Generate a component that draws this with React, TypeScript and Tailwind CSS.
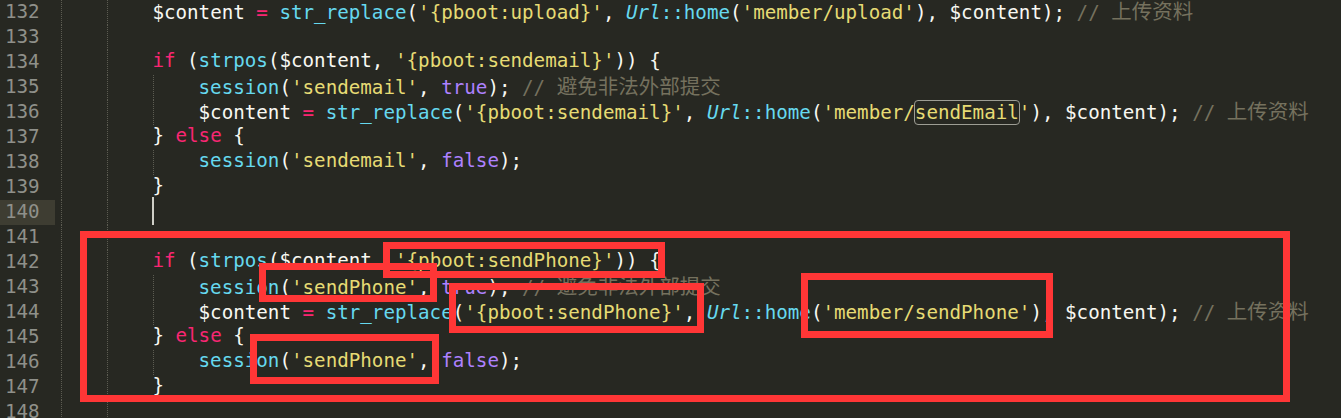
import React from 'react';

type Tok = [string, string];

const C = {
  kw: 'text-[#f92672]',
  fn: 'text-[#66d9ef]',
  cls: 'text-[#66d9ef] italic',
  tx: 'text-[#f8f8f2]',
  str: 'text-[#e6db74]',
  num: 'text-[#ae81ff]',
  cm: 'text-[#75715e]',
};

const replaceLine = (key: string, target: string, boxed?: boolean): Tok[] => [
  ['$content ', 'tx'],
  ['= ', 'kw'],
  ['str_replace', 'fn'],
  ['(', 'tx'],
  [`'{pboot:${key}}'`, 'str'],
  [', ', 'tx'],
  ['Url', 'cls'],
  ['::', 'fn'],
  ['home', 'fn'],
  ['(', 'tx'],
  ["'member/", 'str'],
  [target, boxed ? 'box' : 'str'],
  ["'", 'str'],
  ['), $content); ', 'tx'],
  ['// ', 'cm'],
  ['上传资料', 'cjk'],
];

const ifLine = (key: string): Tok[] => [
  ['if ', 'kw'],
  ['(', 'tx'],
  ['strpos', 'fn'],
  ['($content, ', 'tx'],
  [`'{pboot:${key}}'`, 'str'],
  [')) {', 'tx'],
];

const sessionLine = (key: string, val: string, comment?: boolean): Tok[] => {
  const t: Tok[] = [
    ['session', 'fn'],
    ['(', 'tx'],
    [`'${key}'`, 'str'],
    [', ', 'tx'],
    [val, 'num'],
    [');', 'tx'],
  ];
  if (comment) {
    t.push([' // ', 'cm'], ['避免非法外部提交', 'cjk']);
  }
  return t;
};

const elseLine: Tok[] = [
  ['} ', 'tx'],
  ['else', 'kw'],
  [' {', 'tx'],
];

const lines: { n: number; level: number; toks: Tok[]; cursor?: boolean }[] = [
  {
    n: 132,
    level: 0,
    toks: [
      ['$content ', 'tx'],
      ['= ', 'kw'],
      ['str_replace', 'fn'],
      ['(', 'tx'],
      ["'{pboot:upload}'", 'str'],
      [', ', 'tx'],
      ['Url', 'cls'],
      ['::', 'fn'],
      ['home', 'fn'],
      ['(', 'tx'],
      ["'member/upload'", 'str'],
      ['), $content); ', 'tx'],
      ['// ', 'cm'],
      ['上传资料', 'cjk'],
    ],
  },
  { n: 133, level: 0, toks: [] },
  { n: 134, level: 0, toks: ifLine('sendemail') },
  { n: 135, level: 1, toks: sessionLine('sendemail', 'true', true) },
  { n: 136, level: 1, toks: replaceLine('sendemail', 'sendEmail', true) },
  { n: 137, level: 0, toks: elseLine },
  { n: 138, level: 1, toks: sessionLine('sendemail', 'false') },
  { n: 139, level: 0, toks: [['}', 'tx']] },
  { n: 140, level: 0, toks: [], cursor: true },
  { n: 141, level: 0, toks: [] },
  { n: 142, level: 0, toks: ifLine('sendPhone') },
  { n: 143, level: 1, toks: sessionLine('sendPhone', 'true', true) },
  { n: 144, level: 1, toks: replaceLine('sendPhone', 'sendPhone') },
  { n: 145, level: 0, toks: elseLine },
  { n: 146, level: 1, toks: sessionLine('sendPhone', 'false') },
  { n: 147, level: 0, toks: [['}', 'tx']] },
  { n: 148, level: 0, toks: [] },
];

const Token = ({ t }: { t: Tok }) => {
  const [text, kind] = t;
  if (kind === 'cjk') {
    return (
      <span className="text-[#75715e] text-[20.5px] font-['Noto_Sans_CJK_SC',sans-serif]">{text}</span>
    );
  }
  if (kind === 'box') {
    return (
      <span className="text-[#e6db74] outline outline-1 outline-[#9d9d94] rounded-[3px]">{text}</span>
    );
  }
  return <span className={C[kind as keyof typeof C]}>{text}</span>;
};

const Guide = () => (
  <div className="w-[46.2px] h-[25px] shrink-0 border-l border-dotted border-[#5c5c52]" />
);

const App = () => {
  return (
    <div className="relative w-[1341px] h-[418px] overflow-hidden bg-[#272822] font-['DejaVu_Sans_Mono',monospace] text-[19.2px] leading-[21px]">
      {lines.map((l) => (
        <div key={l.n} className="flex h-[25px] whitespace-pre">
          <div className="w-[61px] shrink-0">
            <div
              className={
                'w-[55px] h-[25px] pl-[5px] pt-[1px] text-[#8f908a] ' + (l.cursor ? 'bg-[#3e3d32]' : '')
              }
            >
              {l.n}
            </div>
          </div>
          <Guide />
          <Guide />
          {l.level === 1 && <Guide />}
          {l.cursor && <div className="w-[2px] h-[28px] -mt-[3px] -ml-[1px] bg-[#cfcfc7]" />}
          <div className="flex-1 -ml-[1px]">
            {l.toks.map((t, i) => (
              <Token key={i} t={t} />
            ))}
          </div>
        </div>
      ))}

      {/* red annotation boxes */}
      <div className="absolute left-[80px] top-[231px] w-[1210px] h-[171px] border-[7px] border-[#ff3636]" />
      <div className="absolute left-[383px] top-[242px] w-[282px] h-[36px] border-[7px] border-[#ff3636]" />
      <div className="absolute left-[259px] top-[263px] w-[178px] h-[39px] border-[7px] border-[#ff3636]" />
      <div className="absolute left-[449px] top-[283px] w-[255px] h-[50px] border-[7px] border-[#ff3636]" />
      <div className="absolute left-[801px] top-[273px] w-[252px] h-[65px] border-[7px] border-[#ff3636]" />
      <div className="absolute left-[250px] top-[334px] w-[189px] h-[50px] border-[7px] border-[#ff3636]" />
    </div>
  );
};

export default App;
